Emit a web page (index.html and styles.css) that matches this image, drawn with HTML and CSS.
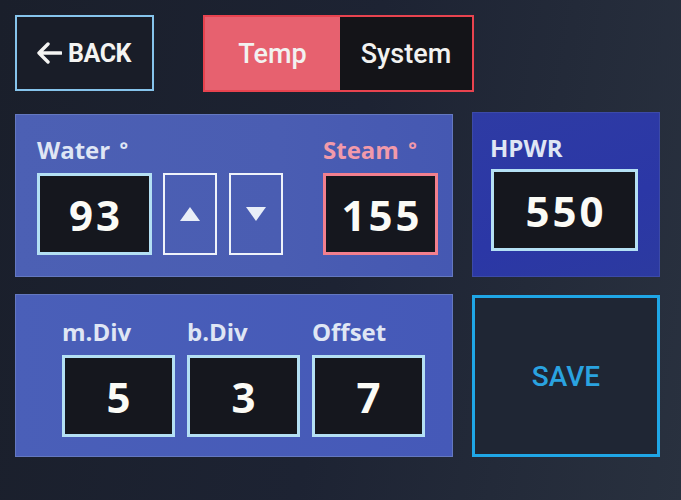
FILE: index.html
```html
<!DOCTYPE html>
<html>
<head>
<meta charset="utf-8">
<link rel="stylesheet" href="styles.css">
</head>
<body>
<div class="screen">
  <div class="topbar">
    <div class="back-btn"><svg class="arrow" width="26" height="24" viewBox="0 0 26 24"><path d="M12 3 L3 12 L12 21 M3 12 L25 12" fill="none" stroke="#f4f4f2" stroke-width="3.4" stroke-linecap="round" stroke-linejoin="round"/></svg>BACK</div>
    <div class="tabs">
      <div class="tab active">Temp</div>
      <div class="tab">System</div>
    </div>
  </div>
  <div class="grid">
    <div class="panel temp-panel">
      <div class="group">
        <div class="label">Water <span class="deg">°</span></div>
        <div class="row">
          <div class="valbox">93</div>
          <div class="arrowbtn"><svg width="20" height="14" viewBox="0 0 20 14"><polygon points="10,0 20,14 0,14" fill="#e8eef8"/></svg></div>
          <div class="arrowbtn"><svg width="20" height="14" viewBox="0 0 20 14"><polygon points="0,0 20,0 10,14" fill="#e8eef8"/></svg></div>
        </div>
      </div>
      <div class="group">
        <div class="label steam">Steam <span class="deg">°</span></div>
        <div class="valbox pink">155</div>
      </div>
    </div>
    <div class="panel hpwr-panel">
      <div class="label">HPWR</div>
      <div class="valbox wide">550</div>
    </div>
    <div class="panel div-panel">
      <div class="group">
        <div class="label">m.Div</div>
        <div class="valbox small">5</div>
      </div>
      <div class="group">
        <div class="label">b.Div</div>
        <div class="valbox small">3</div>
      </div>
      <div class="group">
        <div class="label">Offset</div>
        <div class="valbox small">7</div>
      </div>
    </div>
    <div class="save-btn">SAVE</div>
  </div>
</div>
</body>
</html>
```
FILE: styles.css
```css
html, body {
  margin: 0;
  padding: 0;
}
body {
  width: 681px;
  height: 500px;
  overflow: hidden;
  background: linear-gradient(100deg, #1a1f2b 0%, #1d2333 50%, #29313f 100%);
  font-family: "Open Sans", "Noto Sans", sans-serif;
  color: #f4f4f4;
}
.screen {
  padding: 15px 0 0 15px;
  box-sizing: border-box;
  height: 500px;
}
.topbar {
  display: flex;
  gap: 49px;
  height: 77px;
}
.back-btn {
  width: 139px;
  height: 76px;
  box-sizing: border-box;
  border: 2px solid #86c4ec;
  background: #191d28;
  display: flex;
  align-items: center;
  justify-content: center;
  font-family: "Roboto", "Liberation Sans", sans-serif;
  font-weight: 700;
  font-size: 25px;
  letter-spacing: -0.5px;
  color: #f4f4f2;
}
.back-btn .arrow {
  margin-right: 6px;
  margin-left: -2px;
}
.tabs {
  width: 271px;
  height: 77px;
  box-sizing: border-box;
  border: 2px solid #e8434f;
  display: flex;
}
.tab {
  flex: 1;
  display: flex;
  align-items: center;
  justify-content: center;
  font-family: "Roboto", "Liberation Sans", sans-serif;
  font-weight: 500;
  font-size: 27px;
  background: #141418;
  color: #f2f2f0;
}
.tab.active {
  flex: 0 0 135px;
  background: #e7616f;
}
.grid {
  margin-top: 22px;
  display: grid;
  grid-template-columns: 438px 188px;
  grid-template-rows: 163px 163px;
  column-gap: 19px;
  row-gap: 17px;
}
.panel {
  box-sizing: border-box;
  border: 1px solid #6478c0;
}
.temp-panel {
  background: linear-gradient(90deg, #4c60b4 0%, #4a5db2 60%, #4558b2 100%);
  display: flex;
  justify-content: space-between;
  padding: 20px 14px 0 21px;
}
.hpwr-panel {
  margin-top: -2px;
  background: linear-gradient(160deg, #2e3ba4 0%, #2b37a6 60%, #2c3aa0 100%);
  border-color: #3c4aa8;
  padding: 20px 0 0 17px;
}
.div-panel {
  background: linear-gradient(90deg, #4a5fb8 0%, #4559b8 100%);
  display: flex;
  gap: 12px;
  padding: 22px 0 0 46px;
}
.label {
  font-weight: 700;
  font-size: 24px;
  line-height: 30px;
  color: #dfe6f4;
  height: 38px;
  white-space: pre;
}
.label .deg {
  margin-left: 3px;
  font-size: 20px;
  vertical-align: 2px;
}
.label.steam {
  color: #f29aaa;
}
.row {
  display: flex;
  gap: 11px;
}
.valbox {
  width: 115px;
  height: 82px;
  box-sizing: border-box;
  border: 3px solid #b4e0f4;
  background: #15171e;
  display: flex;
  align-items: center;
  justify-content: center;
  font-family: "Noto Sans", "Open Sans", sans-serif;
  font-weight: 700;
  font-size: 42px;
  color: #fbfbf6;
  letter-spacing: 3px;
  padding-left: 3px;
}
.valbox.pink {
  border-color: #f27f8e;
}
.valbox.wide {
  width: 147px;
  margin-left: 1px;
  margin-top: -2px;
}
.valbox.small {
  width: 113px;
}
.div-panel .label {
  height: 38px;
}
.arrowbtn {
  width: 54px;
  height: 82px;
  box-sizing: border-box;
  border: 2px solid #eef2fa;
  display: flex;
  align-items: center;
  justify-content: center;
}
.row .arrowbtn + .arrowbtn {
  margin-left: 1px;
}
.save-btn {
  margin-top: 1px;
  box-sizing: border-box;
  border: 3px solid #1fa6e6;
  background: #1f2634;
  display: flex;
  align-items: center;
  justify-content: center;
  font-family: "Roboto", "Liberation Sans", sans-serif;
  font-size: 28px;
  font-weight: 500;
  color: #2aa3e0;
}
```
